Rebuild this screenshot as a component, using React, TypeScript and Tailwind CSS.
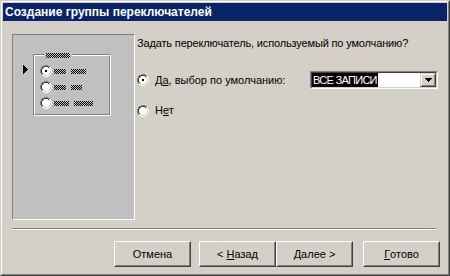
import React, { useId } from "react";

const FONT = { fontFamily: '"Liberation Sans", Arial, sans-serif' };

function Radio({ checked = false }: { checked?: boolean }) {
  const rects: React.ReactNode[] = [];
  for (let y = 0; y < 12; y++) {
    for (let x = 0; x < 12; x++) {
      const d = Math.hypot(x + 0.5 - 6, y + 0.5 - 6);
      const tl = x + y <= 10;
      let fill: string | null = null;
      if (d >= 5.0 && d <= 5.9) fill = tl ? "#808080" : "#ffffff";
      else if (d >= 4.2 && d < 5.0) fill = tl ? "#404040" : "#d4d0c8";
      else if (d < 4.2) fill = "#ffffff";
      if (checked && d < 1.3) fill = "#000000";
      if (fill) rects.push(<rect key={`${x}-${y}`} x={x} y={y} width={1} height={1} fill={fill} />);
    }
  }
  return (
    <svg width={12} height={12} viewBox="0 0 12 12" shapeRendering="crispEdges" className="shrink-0">
      {rects}
    </svg>
  );
}

function Hatch({ w }: { w: number }) {
  const id = useId().replace(/:/g, "");
  return (
    <svg width={w} height={5} viewBox={`0 0 ${w} 5`} shapeRendering="crispEdges" className="shrink-0">
      <defs>
        <pattern id={id} width={2} height={2} patternUnits="userSpaceOnUse">
          <rect x={0} y={0} width={1} height={1} fill="#000" />
          <rect x={1} y={1} width={1} height={1} fill="#000" />
        </pattern>
      </defs>
      <rect x={0} y={0} width={w} height={5} fill={`url(#${id})`} />
    </svg>
  );
}

function HatchWords({ words }: { words: number[] }) {
  return (
    <div className="flex gap-[5px] items-center">
      {words.map((w, i) => (
        <Hatch key={i} w={w} />
      ))}
    </div>
  );
}

function Arrow() {
  return (
    <svg width={6} height={9} viewBox="0 0 6 9" shapeRendering="crispEdges">
      <path d="M0 0h1v1H0zM0 1h2v1H0zM0 2h3v1H0zM0 3h4v1H0zM0 4h5v1H0zM0 5h4v1H0zM0 6h3v1H0zM0 7h2v1H0zM0 8h1v1H0z" fill="#000" />
    </svg>
  );
}

function Button({ children }: { children: React.ReactNode }) {
  return (
    <div className="w-[77px] h-[26px] border border-t-white border-l-white border-r-[#404040] border-b-[#404040]">
      <div className="w-full h-full border border-t-[#d4d0c8] border-l-[#d4d0c8] border-r-[#808080] border-b-[#808080] flex items-center justify-center text-[11px] text-black leading-[13px] whitespace-pre">
        {children}
      </div>
    </div>
  );
}

export default function App() {
  return (
    <div style={FONT} className="w-[450px] h-[276px] bg-[#d4d0c8] border border-t-[#d4d0c8] border-l-[#d4d0c8] border-r-[#404040] border-b-[#404040]">
      <div className="w-full h-full border border-t-white border-l-white border-r-[#808080] border-b-[#808080] p-px flex flex-col">
        <div className="h-[18px] bg-[#0a246a] flex items-center pl-[2px] text-white font-bold text-[12px] leading-[14px]">
          Создание группы переключателей
        </div>

        <div className="flex flex-col pl-[9px]">
          <div className="flex mt-[13px]">
            {/* preview panel */}
            <div className="w-[123px] h-[186px] bg-[#c0c0c0] border border-t-[#808080] border-l-[#808080] border-r-white border-b-white">
              <div className="flex pl-[10px] pt-[19px]">
                <div className="w-[10px] pt-[11px]">
                  <Arrow />
                </div>
                <div className="relative w-[78px] border border-t-[#808080] border-l-[#808080] border-r-white border-b-white">
                  <div className="border border-t-white border-l-white border-r-[#808080] border-b-[#808080] pl-[5px] pt-[9px] pb-[5px] flex flex-col gap-[4px]">
                    <div className="flex items-center gap-[2px] h-[12px]">
                      <Radio checked />
                      <HatchWords words={[12, 15]} />
                    </div>
                    <div className="flex items-center gap-[2px] h-[12px]">
                      <Radio />
                      <HatchWords words={[12, 11]} />
                    </div>
                    <div className="flex items-center gap-[2px] h-[12px]">
                      <Radio />
                      <HatchWords words={[15, 19]} />
                    </div>
                  </div>
                  <div className="absolute left-[10px] top-[-2px] px-[2px] bg-[#c0c0c0] flex">
                    <Hatch w={24} />
                  </div>
                </div>
              </div>
            </div>

            {/* right column */}
            <div className="flex-1 flex flex-col pl-[2px] pt-[3px] text-[11px] leading-[13px] text-black">
              <div className="tracking-[-0.15px] whitespace-nowrap">Задать переключатель, используемый по умолчанию?</div>
              <div className="flex items-center h-[18px] mt-[21px]">
                <Radio checked />
                <div className="w-[161px] pl-[6px] whitespace-nowrap">
                  Д<u className="underline-offset-[1px]">а</u>, выбор по умолчанию:
                </div>
                <div className="w-[128px] h-[18px] border border-t-[#808080] border-l-[#808080] border-r-white border-b-white">
                  <div className="w-full h-full border border-t-[#404040] border-l-[#404040] border-r-[#d4d0c8] border-b-[#d4d0c8] bg-white flex">
                    <div className="flex-1 flex items-stretch">
                      <span className="bg-black text-white px-px flex items-center tracking-[-0.7px] whitespace-nowrap">ВСЕ ЗАПИСИ</span>
                    </div>
                    <div className="w-[16px] h-full border border-t-[#d4d0c8] border-l-[#d4d0c8] border-r-[#404040] border-b-[#404040]">
                      <div className="w-full h-full bg-[#d4d0c8] border border-t-white border-l-white border-r-[#808080] border-b-[#808080] flex items-center justify-center">
                        <svg width={7} height={4} viewBox="0 0 7 4" shapeRendering="crispEdges">
                          <path d="M0 0h7v1H0zM1 1h5v1H1zM2 2h3v1H2zM3 3h1v1H3z" fill="#000" />
                        </svg>
                      </div>
                    </div>
                  </div>
                </div>
              </div>
              <div className="flex items-center h-[13px] mt-[15px]">
                <Radio />
                <div className="pl-[6px]">
                  Н<u className="underline-offset-[1px]">е</u>т
                </div>
              </div>
            </div>
          </div>

          <div className="w-[424px] mt-[8px] border-t border-t-[#808080] border-b border-b-white" />
        </div>

        <div className="flex justify-end pr-[7px] mt-[11px]">
          <Button>Отмена</Button>
          <div className="w-[8px]" />
          <Button>
            {"< "}
            <u className="underline-offset-[1px]">Н</u>
            {"азад"}
          </Button>
          <Button>
            <u className="underline-offset-[1px]">Д</u>
            {"алее >"}
          </Button>
          <div className="w-[10px]" />
          <Button>
            <u className="underline-offset-[1px]">Г</u>
            {"отово"}
          </Button>
        </div>
      </div>
    </div>
  );
}
